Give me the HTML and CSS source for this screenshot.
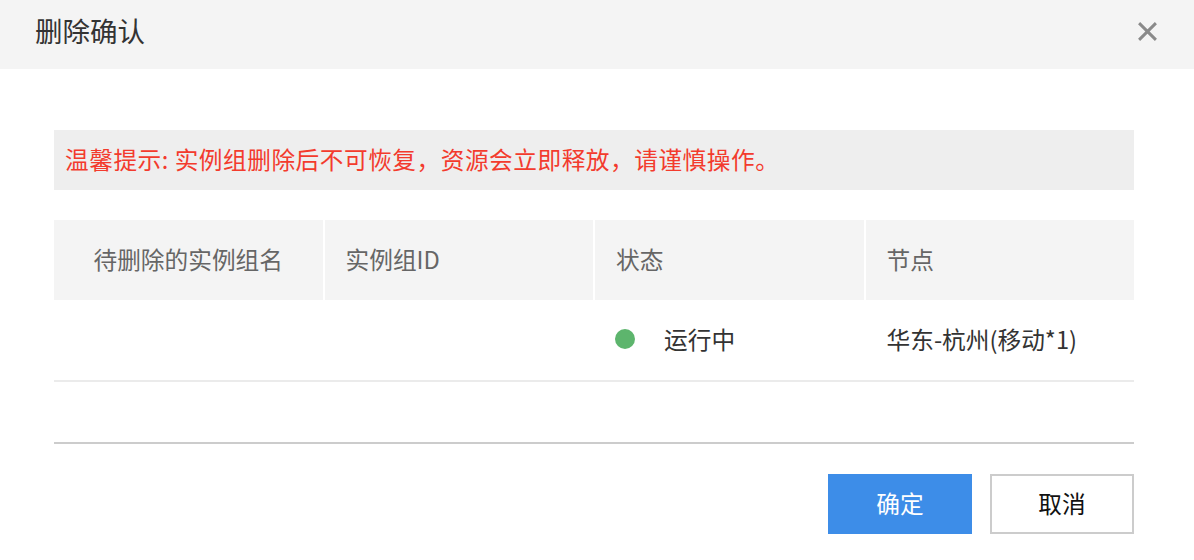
FILE: index.html
```
<html>
	<head>
		<title>删除确认</title>
		<link rel="stylesheet" href="styles.css">
	</head>
	<body>
		<div class="dialog">
			<div class="dialog-head">
				<span class="dialog-title">删除确认</span>
				<span class="close">
					<svg width="21" height="21" viewBox="0 0 20 20">
						<path d="M2 2 L18 18 M18 2 L2 18" stroke="#8a8a8a" stroke-width="2.8" fill="none"/>
					</svg>
				</span>
			</div>
			<div class="dialog-body">
				<div class="tip">温馨提示: 实例组删除后不可恢复，资源会立即释放，请谨慎操作。</div>
				<div class="grid">
					<div class="row head">
						<div class="cell first">待删除的实例组名</div>
						<div class="cell">实例组ID</div>
						<div class="cell">状态</div>
						<div class="cell">节点</div>
					</div>
					<div class="row item">
						<div class="cell first"></div>
						<div class="cell"></div>
						<div class="cell"><span class="dot"></span>运行中</div>
						<div class="cell">华东-杭州(移动*1)</div>
					</div>
					<div class="row blank"></div>
				</div>
				<div class="actions">
					<button class="btn primary">确定</button>
					<button class="btn">取消</button>
				</div>
			</div>
		</div>
	</body>
</html>
```

FILE: styles.css
```
html{
	font-family: "Noto Sans CJK SC", "Noto Sans", sans-serif;
}
body{
	margin: 0;
	background: #ffffff;
	color: #333333;
}
.dialog-head{
	height: 69px;
	background: #f4f4f4;
	display: flex;
	align-items: center;
	justify-content: space-between;
	padding: 0 36px 9px 35px;
	box-sizing: border-box;
}
.dialog-title{
	font-size: 27.5px;
	line-height: 30px;
	color: #333333;
}
.close{
	display: flex;
	margin-top: 2px;
}
.dialog-body{
	padding: 61px 60px 0 54px;
}
.tip{
	height: 60px;
	line-height: 58px;
	background: #eeeeee;
	color: #f33b2d;
	font-size: 23.7px;
	letter-spacing: 0.5px;
	padding-left: 11px;
}
.grid{
	margin-top: 30px;
}
.row{
	display: grid;
	grid-template-columns: 1fr 1fr 1fr 1fr;
	column-gap: 2px;
}
.cell{
	display: flex;
	align-items: center;
	padding: 0 0 3px 21px;
	font-size: 23.7px;
}
.cell.first{
	justify-content: center;
	padding-left: 0;
}
.head{
	height: 80px;
}
.head .cell{
	background: #f4f4f4;
	color: #666666;
}
.item{
	height: 80px;
	border-bottom: 2px solid #ebebeb;
}
.item .cell{
	color: #333333;
}
.dot{
	width: 20px;
	height: 20px;
	border-radius: 50%;
	background: #5db56d;
	margin: 0 29px 0 -1px;
}
.blank{
	height: 60px;
	border-bottom: 2px solid #cccccc;
}
.actions{
	display: flex;
	justify-content: flex-end;
	gap: 18px;
	margin-top: 30px;
}
.btn{
	width: 144px;
	height: 60px;
	font-family: "Noto Sans CJK SC", sans-serif;
	font-size: 23.7px;
	padding-bottom: 3px;
	background: #ffffff;
	color: #111111;
	border: 2px solid #cccccc;
}
.btn.primary{
	background: #3d8de8;
	color: #ffffff;
	border: none;
}
```
